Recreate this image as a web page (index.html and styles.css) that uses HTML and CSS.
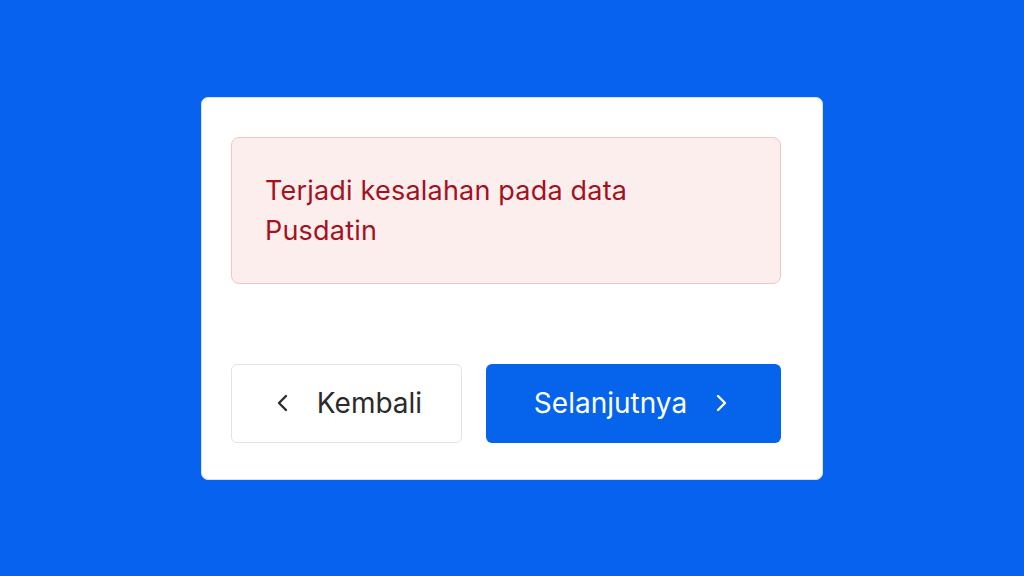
FILE: index.html
```html
<!DOCTYPE html>
<html lang="id">
  <head>
    <meta charset="UTF-8" />
    <title>Pusdatin - Kesalahan</title>
    <link rel="stylesheet" href="styles.css">
  </head>
  <body>
    <div class="card">
      <div class="alert">Terjadi kesalahan pada data Pusdatin</div>

      <div class="actions">
        <button class="btn btn-back">
          <svg class="chev" viewBox="0 0 24 24"><path d="M15 5l-7 7 7 7" /></svg>
          Kembali
        </button>
        <button class="btn btn-next">
          Selanjutnya
          <svg class="chev" viewBox="0 0 24 24"><path d="M9 5l7 7-7 7" /></svg>
        </button>
      </div>
    </div>
  </body>
</html>
```

FILE: styles.css
```css
html,
body {
  margin: 0;
  height: 100%;
}
body {
  background: #0763ef;
  font-family: Inter, "Noto Sans", sans-serif;
  display: flex;
  align-items: center;
  justify-content: center;
}
.card {
  box-sizing: border-box;
  width: 622px;
  padding: 39px 41px 36px 29px;
  background: #fff;
  border: 1px solid #d8e2f5;
  border-radius: 7px;
}
.alert {
  box-sizing: border-box;
  height: 147px;
  padding: 33px 110px 0 33px;
  background: #fdeeee;
  border: 1px solid #f2c6c8;
  border-radius: 8px;
  color: #a3121f;
  font-size: 27px;
  line-height: 40px;
  letter-spacing: 0.2px;
}
.actions {
  display: flex;
  gap: 24px;
  margin-top: 80px;
}
.btn {
  box-sizing: border-box;
  height: 79px;
  display: flex;
  align-items: center;
  justify-content: center;
  gap: 22px;
  border-radius: 6px;
  font-family: inherit;
  font-size: 28px;
  cursor: pointer;
}
.btn-back {
  width: 231px;
  background: #fff;
  border: 1px solid #e3e3e3;
  color: #2b2b2b;
}
.btn-next {
  flex: 1;
  background: #0563ec;
  border: none;
  color: #fff;
}
.chev {
  width: 24px;
  height: 24px;
  fill: none;
  stroke: currentColor;
  stroke-width: 2.4;
  stroke-linecap: round;
  stroke-linejoin: round;
}
```
